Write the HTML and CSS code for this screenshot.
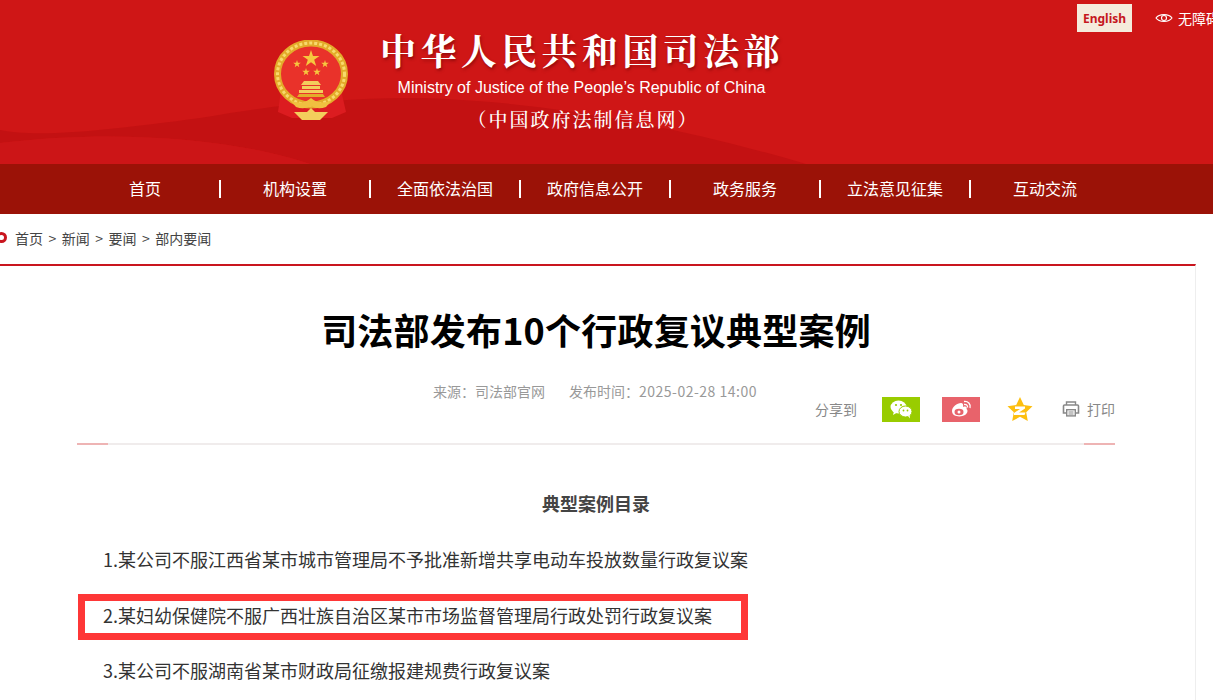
FILE: index.html
```html
<!DOCTYPE html>
<html lang="zh-CN">
  <head>
    <meta charset="UTF-8" />
    <title>司法部发布10个行政复议典型案例</title>
    <link rel="stylesheet" href="styles.css">
  </head>
  <body>
    <header class="banner">
      <svg class="waves" viewBox="0 0 1213 164" preserveAspectRatio="none" aria-hidden="true">
        <path d="M0 130 C40 138 110 130 200 118 C280 104 350 97 420 98 C560 102 690 130 806 164 L310 164 C240 140 120 128 0 143Z" fill="#c31112"/>
        <path d="M0 143 C120 128 240 140 310 164 L0 164Z" fill="#cc1517"/>
      </svg>
      <div class="brand">
        <svg class="emblem" viewBox="0 0 76 84" aria-hidden="true">
          <path d="M7 50 L4 72 L18 78 L58 78 L72 72 L67 50Z" fill="#dc1c20"/>
          <ellipse cx="37" cy="34" rx="33.500" ry="31" fill="#e9322a" stroke="#e3ab2a" stroke-width="7"/>
          <ellipse cx="37" cy="34" rx="33.500" ry="31" fill="none" stroke="#f8d96c" stroke-width="3" stroke-dasharray="3 2"/>
          <polygon points="37,10 39,16 45.500,16 40.200,19.800 42.200,26 37,22.200 31.800,26 33.800,19.800 28.500,16 35,16" fill="#f6c73f"/>
          <polygon points="23,20 23.900,22.800 26.800,22.800 24.500,24.500 25.300,27.200 23,25.600 20.700,27.200 21.500,24.500 19.200,22.800 22.100,22.800" fill="#f6c73f"/>
          <polygon points="51,20 51.900,22.800 54.800,22.800 52.500,24.500 53.300,27.200 51,25.600 48.700,27.200 49.500,24.500 47.200,22.800 50.100,22.800" fill="#f6c73f"/>
          <polygon points="32,28 32.900,30.800 35.800,30.800 33.500,32.500 34.300,35.200 32,33.600 29.700,35.200 30.500,32.500 28.200,30.800 31.100,30.800" fill="#f6c73f"/>
          <polygon points="43,28 43.900,30.800 46.800,30.800 44.500,32.500 45.300,35.200 43,33.600 40.700,35.200 41.500,32.500 39.200,30.800 42.100,30.800" fill="#f6c73f"/>
          <path d="M30 41 H44 L47 45 H27Z M28 46 H46 V49 H28Z M25 50 H49 V53 H25Z" fill="#f3cd5c"/>
          <path d="M25 54 H49 L51 57 H23Z" fill="#e3ab2a"/>
          <path d="M16 60 Q28 66 37 58 Q46 66 58 60 L52 67 Q44 70 37 66 Q30 70 22 67Z" fill="#f0c040"/>
          <path d="M20 72 L33 72 L37 68 L41 72 L54 72 L46 80 H28Z" fill="#f3cd5c"/>
        </svg>
        <div class="brand-text">
          <div class="brand-cn">中华人民共和国司法部</div>
          <div class="brand-en">Ministry of Justice of the People’s Republic of China</div>
          <div class="brand-sub">（中国政府法制信息网）</div>
        </div>
      </div>
      <div class="tools">
        <a class="lang">English</a>
        <a class="access">
          <svg viewBox="0 0 18 12" width="18" height="12" aria-hidden="true">
            <path d="M1 6 C4 1.500 14 1.500 17 6 C14 10.500 4 10.500 1 6Z" fill="none" stroke="#fff" stroke-width="1.100"/>
            <circle cx="9" cy="6" r="2.500" fill="none" stroke="#fff" stroke-width="1.100"/>
          </svg>
          无障碍
        </a>
      </div>
    </header>

    <nav class="nav">
      <a>首页</a>
      <a>机构设置</a>
      <a>全面依法治国</a>
      <a>政府信息公开</a>
      <a>政务服务</a>
      <a>立法意见征集</a>
      <a>互动交流</a>
    </nav>

    <main class="wrap">
      <div class="crumbs">
        <i class="dot"></i>
        <a>首页</a><span>&gt;</span><a>新闻</a><span>&gt;</span><a>要闻</a><span>&gt;</span><a>部内要闻</a>
      </div>

      <article class="article">
        <h1>司法部发布10个行政复议典型案例</h1>
        <div class="meta">
          <span>来源：司法部官网</span>
          <span>发布时间：<span class="meta-time">2025-02-28 14:00</span></span>
        </div>
        <div class="share">
          <span class="share-label">分享到</span>
          <a class="share-btn wechat">
            <svg viewBox="0 0 24 20" width="24" height="20" aria-hidden="true">
              <ellipse cx="9.500" cy="8" rx="8" ry="6.500" fill="#fff"/>
              <path d="M5 12 L4 16 L9 13Z" fill="#fff"/>
              <ellipse cx="16.500" cy="12.500" rx="6.500" ry="5.500" fill="#fff" stroke="#99cc00"/>
              <path d="M19 17 L21 19.500 L20.500 15Z" fill="#fff"/>
              <circle cx="7" cy="6" r="1.100" fill="#99cc00"/>
              <circle cx="12" cy="6" r="1.100" fill="#99cc00"/>
              <circle cx="14.500" cy="11.500" r=".9" fill="#99cc00"/>
              <circle cx="18.500" cy="11.500" r=".9" fill="#99cc00"/>
            </svg>
          </a>
          <a class="share-btn weibo">
            <svg viewBox="0 0 24 20" width="24" height="20" aria-hidden="true">
              <path d="M3 12 C3 8 8 4 12 4 C14 4 14.500 6 14 8 C17 7 18.500 8 17.500 10 C19 11 19 14 16 16 C12 18.500 3 18 3 12Z" fill="#fff"/>
              <ellipse cx="10" cy="13" rx="4.500" ry="3.200" fill="#e8636b"/>
              <circle cx="10" cy="13" r="1.500" fill="#fff"/>
              <path d="M15 2.500 C19 2 22 5 21 9 M15 5.500 C17 5 19 6.500 18.500 8.500" fill="none" stroke="#fff" stroke-width="1.300"/>
            </svg>
          </a>
          <a class="qzone">
            <svg viewBox="0 0 26 25" width="26" height="25" aria-hidden="true">
              <polygon points="13,0 16.800,8 25.500,9.200 19.200,15.200 20.800,24 13,19.800 5.200,24 6.800,15.200 .5,9.200 9.200,8" fill="#fdbf10"/>
              <path d="M8 9.500 H18 V11.500 L12 15.500 H18.500 L17.500 18 H7 V16 L13 12 H8Z" fill="#fff"/>
            </svg>
          </a>
          <a class="print">
            <svg viewBox="0 0 18 16" width="18" height="16" aria-hidden="true">
              <path d="M4.500 4 V1 H13.500 V4" fill="none" stroke="#888" stroke-width="1.400"/>
              <path d="M4 12 H1.500 V5 Q1.500 4 2.500 4 H15.500 Q16.500 4 16.500 5 V12 H14" fill="none" stroke="#888" stroke-width="1.600"/>
              <rect x="4.700" y="8.700" width="8.600" height="6.200" fill="none" stroke="#888" stroke-width="1.400"/>
              <path d="M6.500 11 H11.500 M6.500 13 H11.500" stroke="#888"/>
            </svg>
            打印
          </a>
        </div>
        <div class="rule"></div>

        <div class="content">
          <p class="toc-title">典型案例目录</p>
          <p>1.某公司不服江西省某市城市管理局不予批准新增共享电动车投放数量行政复议案</p>
          <p class="marked">2.某妇幼保健院不服广西壮族自治区某市市场监督管理局行政处罚行政复议案</p>
          <p>3.某公司不服湖南省某市财政局征缴报建规费行政复议案</p>
        </div>
      </article>
    </main>
  </body>
</html>
```

FILE: styles.css
```css
html,
body {
  margin: 0;
  height: 700px;
  overflow: hidden;
  background: #fff;
}
body {
  font-family: "Noto Sans CJK SC", "Liberation Sans", sans-serif;
  color: #333;
}
a {
  color: inherit;
  text-decoration: none;
}

/* top banner */
.banner {
  position: relative;
  height: 164px;
  background: #cf1616;
  overflow: hidden;
}
.waves {
  position: absolute;
  left: 0;
  top: 0;
  width: 100%;
  height: 100%;
}
.brand {
  position: relative;
  display: flex;
  padding: 27px 0 0 274px;
}
.emblem {
  width: 76px;
  height: 84px;
  margin-top: 13px;
}
.brand-text {
  width: 408px;
  margin-left: 28px;
  text-align: center;
  color: #fff;
}
.brand-cn {
  font-family: "Noto Serif CJK SC", "Noto Sans CJK SC", serif;
  font-size: 36px;
  font-weight: 700;
  line-height: 46px;
  letter-spacing: 4.400px;
  white-space: nowrap;
  text-shadow: 1px 2px 3px rgba(90, 0, 0, 0.5);
}
.brand-en {
  font-family: "Liberation Sans", sans-serif;
  font-size: 16px;
  line-height: 20px;
  margin-top: 5px;
  padding-right: 1px;
  white-space: nowrap;
}
.brand-sub {
  font-family: "Noto Serif CJK SC", "Noto Sans CJK SC", serif;
  font-size: 19px;
  font-weight: 500;
  line-height: 26px;
  margin-top: 8px;
  padding-left: 2px;
  letter-spacing: 2px;
  white-space: nowrap;
}
.tools {
  position: absolute;
  left: 1077px;
  top: 4px;
  display: flex;
  align-items: center;
  gap: 23px;
  white-space: nowrap;
}
.lang {
  width: 55px;
  height: 28px;
  line-height: 29px;
  text-align: center;
  background: #f5ebdc;
  color: #c5161d;
  font-family: "Noto Sans", sans-serif;
  font-size: 12px;
  font-weight: 700;
}
.access {
  display: flex;
  align-items: center;
  gap: 5px;
  color: #fff;
  font-size: 14px;
  line-height: 28px;
}

/* main nav */
.nav {
  display: flex;
  height: 50px;
  padding-left: 70px;
  background: #9b1207;
}
.nav a {
  position: relative;
  width: 150px;
  line-height: 49px;
  text-align: center;
  color: #fff;
  font-size: 16px;
}
.nav a + a::before {
  content: "";
  position: absolute;
  left: -1px;
  top: 16px;
  width: 2px;
  height: 18px;
  background: #fff;
}

.wrap {
  width: 1200px;
  margin-left: -4px;
}
.crumbs {
  display: flex;
  align-items: center;
  height: 47px;
  padding-bottom: 3px;
  font-size: 14px;
  color: #444;
}
.crumbs span {
  margin: 0 5.500px;
}
.dot {
  width: 11px;
  height: 11px;
  box-sizing: border-box;
  border: 3px solid #c9151e;
  border-radius: 50%;
  margin-right: 8px;
}
.article {
  height: 436px;
  box-sizing: border-box;
  border-top: 2px solid #c9151e;
  border-right: 1px solid #eee;
  padding: 0 80px 0 81px;
}
h1 {
  margin: 0;
  padding-top: 38px;
  text-align: center;
  font-size: 36px;
  line-height: 50px;
  letter-spacing: 0.200px;
  font-weight: 700;
  color: #000;
}
.meta {
  display: flex;
  justify-content: center;
  gap: 24px;
  margin-top: 27px;
  padding-right: 2px;
  font-size: 14px;
  line-height: 20px;
  color: #999;
}
.meta-time {
  letter-spacing: 0.500px;
}
.share {
  display: flex;
  align-items: center;
  justify-content: flex-end;
  height: 26px;
  margin-top: -5px;
  font-size: 14px;
  color: #888;
}
.share-label {
  margin-right: 25px;
}
.share-btn {
  display: flex;
  align-items: center;
  justify-content: center;
  width: 38px;
  height: 25px;
  margin-right: 22px;
}
.wechat {
  background: #99cc00;
}
.weibo {
  background: #e8636b;
  margin-right: 27px;
}
.qzone {
  display: flex;
  margin-right: 29px;
}
.print {
  display: flex;
  align-items: center;
  gap: 7px;
}
.rule {
  height: 2px;
  margin-top: 21px;
  background: linear-gradient(to right, #eeb4b4 31px, #f0ecec 31px, #f0ecec calc(100% - 31px), #eeb4b4 calc(100% - 31px));
}
.content {
  font-size: 18px;
  color: #333;
}
.content p {
  margin: 0;
  padding-left: 26px;
  height: 44px;
  line-height: 44px;
  white-space: nowrap;
  box-sizing: border-box;
}
.content .toc-title {
  margin-top: 36px;
  margin-bottom: 12px;
  padding: 0;
  text-align: center;
  font-weight: 700;
  color: #444;
}
.content .marked {
  width: 670px;
  height: 46px;
  margin-left: 1px;
  margin-top: 13px;
  margin-bottom: 8px;
  padding-left: 18px;
  border: 7px solid #fe3737;
  line-height: 28px;
}
```
